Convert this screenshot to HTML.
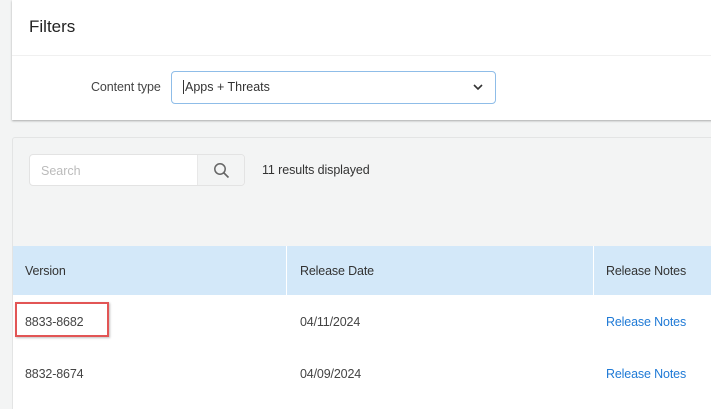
<!DOCTYPE html>
<html><head><meta charset="utf-8"><style>
*{box-sizing:border-box;margin:0;padding:0}
html,body{width:711px;height:409px;overflow:hidden}
body{background:#f3f4f4;font-family:"Liberation Sans",sans-serif;position:relative;color:#333}
.card{position:absolute;left:12px;top:0;width:710px;height:120px;background:#fff;box-shadow:0 1px 2px rgba(0,0,0,.3)}
.title{position:absolute;left:17px;top:17px;font-size:17px;color:#222}
.div{position:absolute;left:0;right:0;top:55px;border-top:1px solid #f0f0f0}
.lbl{position:absolute;left:79px;top:80px;font-size:12.5px;color:#444;letter-spacing:-.1px}
.sel{position:absolute;left:159px;top:71px;width:325px;height:33px;border:1px solid #8fbde8;border-radius:4px}
.sel span{position:absolute;left:11px;top:8px;font-size:12.5px;color:#333;border-left:1px solid #333;padding-left:1px}
.chev{position:absolute;right:12px;top:11px}
.panel{position:absolute;left:12px;top:137px;width:710px;height:272px;background:#f3f4f4;border:1px solid #e3e4e4;border-bottom:none;border-radius:3px 3px 0 0}
.search{position:absolute;left:29px;top:154px;width:216px;height:32px;border:1px solid #e3e3e3;border-radius:4px;background:#fff;overflow:hidden}
.search span{position:absolute;left:11px;top:9px;font-size:12.5px;color:#bbb}
.sbtn{position:absolute;right:0;top:0;width:47px;height:32px;background:#f3f4f4;border-left:1px solid #e8e8e8}
.res{position:absolute;left:262px;top:163px;font-size:12.5px;color:#333;letter-spacing:-.1px}
.head{position:absolute;left:13px;top:246px;width:698px;height:49px;background:#d3e8f9}
.head div,.row div{position:absolute;font-size:12.5px;letter-spacing:-.15px}
.head div{top:18px;color:#333}
.head .sep{position:absolute;top:0;width:1px;height:49px;background:#fff}
.rows{position:absolute;left:13px;top:295px;width:698px;height:114px;background:#fff}
.row{position:absolute;left:0;width:698px;height:20px}
.row div{color:#444}
.row a{position:absolute;left:593px;font-size:12.5px;letter-spacing:-.15px;color:#1f7ad6;text-decoration:none}
.red{position:absolute;left:15px;top:302px;width:94px;height:35px;border:2px solid #e25555;box-shadow:1px 1px 2px rgba(0,0,0,.25)}
</style></head><body>
<div class="card"><div class="title">Filters</div><div class="div"></div>
<div class="lbl">Content type</div>
<div class="sel"><span>Apps + Threats</span><svg class="chev" width="10" height="8" viewBox="0 0 10 8"><path d="M1 2l4 4 4-4" stroke="#333" stroke-width="1.6" fill="none"/></svg></div></div>
<div class="panel"></div>
<div class="search"><span>Search</span><div class="sbtn"><svg style="position:absolute;left:15px;top:7px" width="17" height="17" viewBox="0 0 17 17"><circle cx="7" cy="7" r="5.2" stroke="#666" stroke-width="1.5" fill="none"/><path d="M11 11l4.5 4.5" stroke="#666" stroke-width="1.6"/></svg></div></div>
<div class="res">11 results displayed</div>
<div class="head"><div style="left:12px">Version</div><div class="sep" style="left:273px"></div><div style="left:287px">Release Date</div><div class="sep" style="left:580px"></div><div style="left:593px">Release Notes</div></div>
<div class="rows">
<div class="row" style="top:20px"><div style="left:12px">8833-8682</div><div style="left:287px">04/11/2024</div><a>Release Notes</a></div>
<div class="row" style="top:72px"><div style="left:12px">8832-8674</div><div style="left:287px">04/09/2024</div><a>Release Notes</a></div>
</div>
<div class="red"></div>
</body></html>
